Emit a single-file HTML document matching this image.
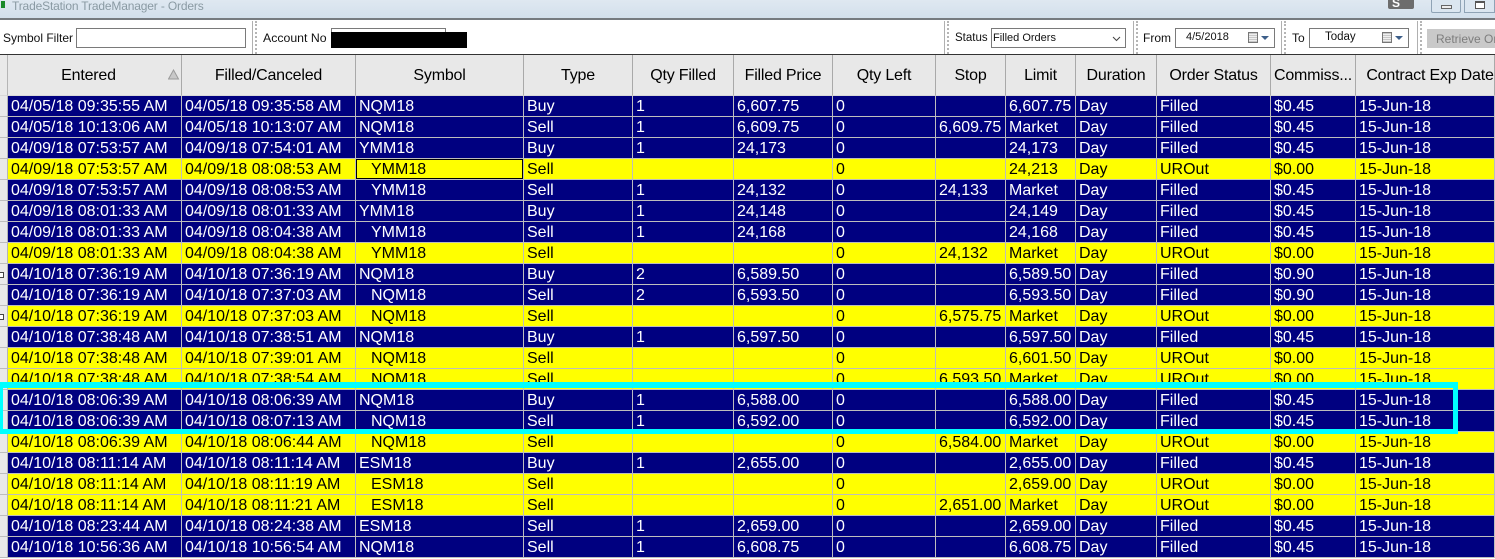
<!DOCTYPE html>
<html><head><meta charset="utf-8"><style>
html,body{margin:0;padding:0;width:1495px;height:559px;overflow:hidden;background:#fff;font-family:"Liberation Sans",sans-serif}
.a{position:absolute}
#tb{left:0;top:0;width:1495px;height:18px;background:linear-gradient(#dfe8f1,#d3e0ec);border-bottom:2px solid #767b80;box-sizing:content-box}
#tt{left:12px;top:-1px;font-size:12px;line-height:15px;color:#8a9aa3;letter-spacing:-.16px;white-space:nowrap}
#bar{left:0;top:20px;width:1495px;height:34px;background:#fff;border-bottom:2px solid #333}
.l{font-size:12px;line-height:14px;color:#111;white-space:nowrap}
.f{background:#fff;border:1px solid #7a7a7a;box-sizing:border-box;height:20px}
.dot{width:0;border-left:2px dotted #b5b5b5;top:21px;height:33px}
.sep{width:1px;background:#b0b0b0;top:21px;height:33px}
table{position:absolute;left:0;top:55px;border-collapse:separate;border-spacing:0;table-layout:fixed;width:1495px;font-size:16px}
td,th{padding:2px 0 0 3px;border-right:1px solid #bdbdbd;border-bottom:1px solid #bdbdbd;height:21px;line-height:18px;overflow:hidden;white-space:nowrap;box-sizing:border-box;font-weight:normal;text-align:left}
tr{height:21px}
th{background:#e8e8e8;height:41px;text-align:center;padding:1px 0 0 0;color:#000;line-height:39px;letter-spacing:-.2px;border-right:1px solid #a9a9a9;border-bottom:1px solid #d8d8d8}
tr.h{height:41px}
td.g,th.g{background:#e9e9e9;padding:0;border-right:1px solid #b5b5b5}
tr.b td{background:#000080;color:#fff}
tr.y td{background:#ff0;color:#000}
tr td.g{background:#e9e9e9!important}
.i{padding-left:15px}
tr.y td.s{box-shadow:inset 0 0 0 1px #000}
#cy{left:0;top:382px;width:1458px;height:52px;box-sizing:border-box;border:solid #0ff;border-width:6px 5px 5px 3px}
</style></head><body>
<div class="a" id="tb"></div>
<div class="a" id="tt">TradeStation TradeManager - Orders</div>
<div class="a" style="left:1px;top:1px;width:4px;height:7px;background:#1a8a2a"></div>
<div class="a" style="left:1388px;top:0;width:26px;height:9px;background:#6d6d6d;border-radius:0 0 2px 2px"></div>
<div class="a" style="left:1392px;top:-3px;font-size:12px;line-height:12px;color:#fff;font-weight:bold">S</div>
<div class="a" style="left:1431px;top:0;width:30px;height:13px;box-sizing:border-box;border:1px solid #8fa3b5;border-top:0;border-radius:0 0 2px 2px;background:#dbe6f0"></div>
<div class="a" style="left:1441px;top:5px;width:11px;height:4px;box-sizing:border-box;border:1px solid #666;background:#eee"></div>
<div class="a" style="left:1464px;top:0;width:31px;height:13px;box-sizing:border-box;border:1px solid #8fa3b5;border-top:0;background:#dbe6f0"></div>
<div class="a" style="left:1475px;top:1px;width:10px;height:8px;box-sizing:border-box;border:1px solid #555;border-top-width:2px;background:#fff"></div>
<div class="a" id="bar"></div>
<div class="a l" style="left:3px;top:31px">Symbol Filter</div>
<div class="a f" style="left:76px;top:28px;width:170px"></div>
<div class="a sep" style="left:252px"></div><div class="a dot" style="left:255px"></div>
<div class="a l" style="left:263px;top:31px;font-size:12.3px">Account No</div>
<div class="a f" style="left:331px;top:28px;width:115px"></div>
<div class="a" style="left:331px;top:32px;width:136px;height:16px;background:#000"></div>
<div class="a sep" style="left:944px"></div><div class="a dot" style="left:947px"></div>
<div class="a l" style="left:955px;top:31px;font-size:11.5px">Status</div>
<div class="a f" style="left:991px;top:28px;width:135px"></div>
<div class="a l" style="left:993px;top:31px;font-size:11px">Filled Orders</div>
<svg class="a" style="left:1112px;top:36px" width="10" height="6"><path d="M1 1L4.5 4.5L8 1" fill="none" stroke="#444" stroke-width="1"/></svg>
<div class="a sep" style="left:1133px"></div><div class="a dot" style="left:1136px"></div>
<div class="a l" style="left:1143px;top:31px">From</div>
<div class="a f" style="left:1175px;top:28px;width:100px"></div>
<div class="a l" style="left:1186px;top:30px;font-size:11px">4/5/2018</div>
<div class="a" style="left:1248px;top:32px;width:10px;height:11px;box-sizing:border-box;border:1px solid #777;background:repeating-linear-gradient(#c8c8c8 0 1px,#efefef 1px 2px)"></div>
<div class="a" style="left:1261px;top:36px;border:4px solid transparent;border-top:4px solid #3d5f8a;border-bottom:0"></div>
<div class="a sep" style="left:1281px"></div><div class="a dot" style="left:1284px"></div>
<div class="a l" style="left:1292px;top:31px">To</div>
<div class="a f" style="left:1309px;top:28px;width:100px"></div>
<div class="a l" style="left:1325px;top:30px;font-size:11.5px">Today</div>
<div class="a" style="left:1382px;top:32px;width:10px;height:11px;box-sizing:border-box;border:1px solid #777;background:repeating-linear-gradient(#c8c8c8 0 1px,#efefef 1px 2px)"></div>
<div class="a" style="left:1395px;top:36px;border:4px solid transparent;border-top:4px solid #3d5f8a;border-bottom:0"></div>
<div class="a sep" style="left:1417px"></div><div class="a dot" style="left:1420px"></div>
<div class="a" style="left:1427px;top:29px;width:68px;height:19px;background:#c9c9c9"></div>
<div class="a l" style="left:1436px;top:32px;color:#7d7d7d">Retrieve Ord</div>
<table>
<colgroup><col style="width:8px"><col style="width:174px"><col style="width:174px"><col style="width:168px"><col style="width:109px"><col style="width:101px"><col style="width:99px"><col style="width:103px"><col style="width:70px"><col style="width:70px"><col style="width:81px"><col style="width:114px"><col style="width:85px"><col style="width:139px"></colgroup>
<tr class="h"><th class="g"></th><th style="padding-right:12px">Entered</th><th>Filled/Canceled</th><th>Symbol</th><th>Type</th><th>Qty Filled</th><th>Filled Price</th><th>Qty Left</th><th>Stop</th><th>Limit</th><th>Duration</th><th>Order Status</th><th>Commiss...</th><th style="padding-left:10px">Contract Exp Date</th></tr>
<tr class="b"><td class="g"></td><td>04/05/18 09:35:55 AM</td><td>04/05/18 09:35:58 AM</td><td>NQM18</td><td>Buy</td><td>1</td><td>6,607.75</td><td>0</td><td></td><td>6,607.75</td><td>Day</td><td>Filled</td><td>$0.45</td><td>15-Jun-18</td></tr>
<tr class="b"><td class="g"></td><td>04/05/18 10:13:06 AM</td><td>04/05/18 10:13:07 AM</td><td>NQM18</td><td>Sell</td><td>1</td><td>6,609.75</td><td>0</td><td>6,609.75</td><td>Market</td><td>Day</td><td>Filled</td><td>$0.45</td><td>15-Jun-18</td></tr>
<tr class="b"><td class="g"></td><td>04/09/18 07:53:57 AM</td><td>04/09/18 07:54:01 AM</td><td>YMM18</td><td>Buy</td><td>1</td><td>24,173</td><td>0</td><td></td><td>24,173</td><td>Day</td><td>Filled</td><td>$0.45</td><td>15-Jun-18</td></tr>
<tr class="y"><td class="g"></td><td>04/09/18 07:53:57 AM</td><td>04/09/18 08:08:53 AM</td><td class="i s">YMM18</td><td>Sell</td><td></td><td></td><td>0</td><td></td><td>24,213</td><td>Day</td><td>UROut</td><td>$0.00</td><td>15-Jun-18</td></tr>
<tr class="b"><td class="g"></td><td>04/09/18 07:53:57 AM</td><td>04/09/18 08:08:53 AM</td><td class="i">YMM18</td><td>Sell</td><td>1</td><td>24,132</td><td>0</td><td>24,133</td><td>Market</td><td>Day</td><td>Filled</td><td>$0.45</td><td>15-Jun-18</td></tr>
<tr class="b"><td class="g"></td><td>04/09/18 08:01:33 AM</td><td>04/09/18 08:01:33 AM</td><td>YMM18</td><td>Buy</td><td>1</td><td>24,148</td><td>0</td><td></td><td>24,149</td><td>Day</td><td>Filled</td><td>$0.45</td><td>15-Jun-18</td></tr>
<tr class="b"><td class="g"></td><td>04/09/18 08:01:33 AM</td><td>04/09/18 08:04:38 AM</td><td class="i">YMM18</td><td>Sell</td><td>1</td><td>24,168</td><td>0</td><td></td><td>24,168</td><td>Day</td><td>Filled</td><td>$0.45</td><td>15-Jun-18</td></tr>
<tr class="y"><td class="g"></td><td>04/09/18 08:01:33 AM</td><td>04/09/18 08:04:38 AM</td><td class="i">YMM18</td><td>Sell</td><td></td><td></td><td>0</td><td>24,132</td><td>Market</td><td>Day</td><td>UROut</td><td>$0.00</td><td>15-Jun-18</td></tr>
<tr class="b"><td class="g"></td><td>04/10/18 07:36:19 AM</td><td>04/10/18 07:36:19 AM</td><td>NQM18</td><td>Buy</td><td>2</td><td>6,589.50</td><td>0</td><td></td><td>6,589.50</td><td>Day</td><td>Filled</td><td>$0.90</td><td>15-Jun-18</td></tr>
<tr class="b"><td class="g"></td><td>04/10/18 07:36:19 AM</td><td>04/10/18 07:37:03 AM</td><td class="i">NQM18</td><td>Sell</td><td>2</td><td>6,593.50</td><td>0</td><td></td><td>6,593.50</td><td>Day</td><td>Filled</td><td>$0.90</td><td>15-Jun-18</td></tr>
<tr class="y"><td class="g"></td><td>04/10/18 07:36:19 AM</td><td>04/10/18 07:37:03 AM</td><td class="i">NQM18</td><td>Sell</td><td></td><td></td><td>0</td><td>6,575.75</td><td>Market</td><td>Day</td><td>UROut</td><td>$0.00</td><td>15-Jun-18</td></tr>
<tr class="b"><td class="g"></td><td>04/10/18 07:38:48 AM</td><td>04/10/18 07:38:51 AM</td><td>NQM18</td><td>Buy</td><td>1</td><td>6,597.50</td><td>0</td><td></td><td>6,597.50</td><td>Day</td><td>Filled</td><td>$0.45</td><td>15-Jun-18</td></tr>
<tr class="y"><td class="g"></td><td>04/10/18 07:38:48 AM</td><td>04/10/18 07:39:01 AM</td><td class="i">NQM18</td><td>Sell</td><td></td><td></td><td>0</td><td></td><td>6,601.50</td><td>Day</td><td>UROut</td><td>$0.00</td><td>15-Jun-18</td></tr>
<tr class="y"><td class="g"></td><td>04/10/18 07:38:48 AM</td><td>04/10/18 07:38:54 AM</td><td class="i">NQM18</td><td>Sell</td><td></td><td></td><td>0</td><td>6,593.50</td><td>Market</td><td>Day</td><td>UROut</td><td>$0.00</td><td>15-Jun-18</td></tr>
<tr class="b"><td class="g"></td><td>04/10/18 08:06:39 AM</td><td>04/10/18 08:06:39 AM</td><td>NQM18</td><td>Buy</td><td>1</td><td>6,588.00</td><td>0</td><td></td><td>6,588.00</td><td>Day</td><td>Filled</td><td>$0.45</td><td>15-Jun-18</td></tr>
<tr class="b"><td class="g"></td><td>04/10/18 08:06:39 AM</td><td>04/10/18 08:07:13 AM</td><td class="i">NQM18</td><td>Sell</td><td>1</td><td>6,592.00</td><td>0</td><td></td><td>6,592.00</td><td>Day</td><td>Filled</td><td>$0.45</td><td>15-Jun-18</td></tr>
<tr class="y"><td class="g"></td><td>04/10/18 08:06:39 AM</td><td>04/10/18 08:06:44 AM</td><td class="i">NQM18</td><td>Sell</td><td></td><td></td><td>0</td><td>6,584.00</td><td>Market</td><td>Day</td><td>UROut</td><td>$0.00</td><td>15-Jun-18</td></tr>
<tr class="b"><td class="g"></td><td>04/10/18 08:11:14 AM</td><td>04/10/18 08:11:14 AM</td><td>ESM18</td><td>Buy</td><td>1</td><td>2,655.00</td><td>0</td><td></td><td>2,655.00</td><td>Day</td><td>Filled</td><td>$0.45</td><td>15-Jun-18</td></tr>
<tr class="y"><td class="g"></td><td>04/10/18 08:11:14 AM</td><td>04/10/18 08:11:19 AM</td><td class="i">ESM18</td><td>Sell</td><td></td><td></td><td>0</td><td></td><td>2,659.00</td><td>Day</td><td>UROut</td><td>$0.00</td><td>15-Jun-18</td></tr>
<tr class="y"><td class="g"></td><td>04/10/18 08:11:14 AM</td><td>04/10/18 08:11:21 AM</td><td class="i">ESM18</td><td>Sell</td><td></td><td></td><td>0</td><td>2,651.00</td><td>Market</td><td>Day</td><td>UROut</td><td>$0.00</td><td>15-Jun-18</td></tr>
<tr class="b"><td class="g"></td><td>04/10/18 08:23:44 AM</td><td>04/10/18 08:24:38 AM</td><td>ESM18</td><td>Sell</td><td>1</td><td>2,659.00</td><td>0</td><td></td><td>2,659.00</td><td>Day</td><td>Filled</td><td>$0.45</td><td>15-Jun-18</td></tr>
<tr class="b"><td class="g"></td><td>04/10/18 10:56:36 AM</td><td>04/10/18 10:56:54 AM</td><td>NQM18</td><td>Sell</td><td>1</td><td>6,608.75</td><td>0</td><td></td><td>6,608.75</td><td>Day</td><td>Filled</td><td>$0.45</td><td>15-Jun-18</td></tr>
</table>
<svg class="a" style="left:168px;top:69px" width="12" height="11"><path d="M5.5 1L10.5 10H.5Z" fill="#c8c8c8" stroke="#9a9a9a"/></svg>
<div class="a" style="left:0;top:272px;width:4px;height:6px;box-sizing:border-box;border:1px solid #444;border-left:0;background:#fff"></div>
<div class="a" style="left:0;top:314px;width:4px;height:6px;box-sizing:border-box;border:1px solid #444;border-left:0;background:#fff"></div>
<div class="a" id="cy"></div>
</body></html>
